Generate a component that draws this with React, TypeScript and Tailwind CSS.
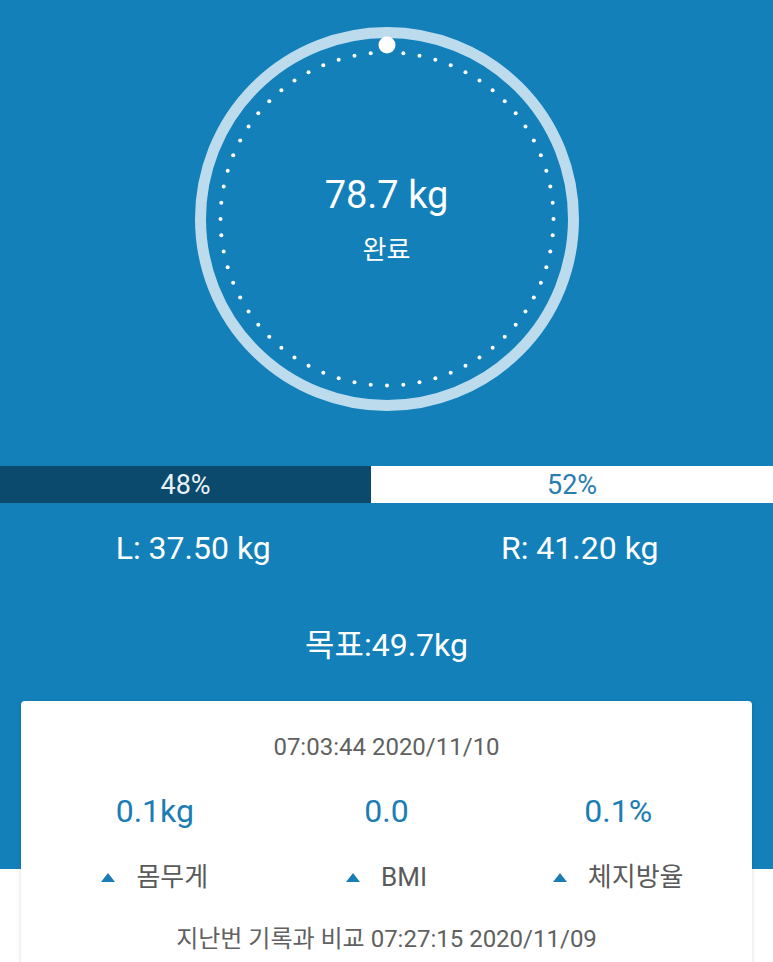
const DOT_COUNT = 64

function Gauge() {
  const cx = 200
  const cy = 200
  const dots = Array.from({ length: DOT_COUNT }, (_, i) => {
    const a = (i / DOT_COUNT) * Math.PI * 2
    return { x: cx + Math.sin(a) * 166.5, y: cy - Math.cos(a) * 166.5, skip: i === 0 }
  })

  return (
    <div className="relative mx-auto h-[400px] w-[400px]">
      <svg width="400" height="400" viewBox="0 0 400 400" className="block">
        <circle cx={cx} cy={cy} r="186.5" fill="none" stroke="#bcdcee" strokeWidth="11" />
        {dots.map((d, i) =>
          d.skip ? null : <circle key={i} cx={d.x} cy={d.y} r="2" fill="#ffffff" />,
        )}
        <circle cx={cx} cy={cy - 174} r="8.5" fill="#ffffff" />
      </svg>
      <div className="absolute inset-0 flex flex-col items-center pt-[154px] text-white">
        <div className="text-[38px] leading-[44px]">78.7 kg</div>
        <div className="mt-[17px] text-[26px] leading-[32px]">완료</div>
      </div>
    </div>
  )
}

function Stat({ value, label }: { value: string; label: string }) {
  return (
    <div className="flex flex-col items-center">
      <div className="text-[32px] leading-[40px] text-[#1c7db4]">{value}</div>
      <div className="mt-[30px] flex items-center gap-[21px]">
        <svg width="14" height="9" viewBox="0 0 14 9" aria-hidden="true">
          <polygon points="7,0 14,9 0,9" fill="#1c7db4" />
        </svg>
        <span className="text-[26px] leading-[32px] text-[#5a5a5a]">{label}</span>
      </div>
    </div>
  )
}

export default function App() {
  return (
    <div className="min-h-[962px] overflow-hidden bg-white font-['Roboto','Noto_Sans_CJK_KR',sans-serif]">
      {/* blue header */}
      <section className="bg-[#1380ba] pt-[19px] pb-[204px]">
        <Gauge />

        <div className="mt-[47px] flex h-[37px]">
          <div className="flex w-[48%] items-center justify-center bg-[#0b4a6c] pt-[2px] text-[27px] text-[#e8f1f6]">
            48%
          </div>
          <div className="flex flex-1 items-center justify-center bg-white pt-[2px] text-[27px] text-[#2a7db1]">
            52%
          </div>
        </div>

        <div className="mt-[25px] grid grid-cols-2 text-center text-[32px] leading-[40px] text-white">
          <div>L: 37.50 kg</div>
          <div>R: 41.20 kg</div>
        </div>

        <div className="mt-[57px] text-center text-[32px] leading-[40px] text-white">목표:49.7kg</div>
      </section>

      {/* comparison card */}
      <div className="relative -mt-[168px] px-[21px]">
        <div className="rounded-[4px] bg-white px-[18px] pt-[31px] pb-[24px] shadow-[0_1px_4px_rgba(0,0,0,0.15)]">
          <div className="text-center text-[24px] leading-[30px] text-[#616161]">07:03:44 2020/11/10</div>

          <div className="mt-[29px] grid grid-cols-3">
            <Stat value="0.1kg" label="몸무게" />
            <Stat value="0.0" label="BMI" />
            <Stat value="0.1%" label="체지방율" />
          </div>

          <div className="mt-[31px] text-center text-[24px] leading-[30px] text-[#616161]">
            지난번 기록과 비교 07:27:15 2020/11/09
          </div>
        </div>
      </div>
    </div>
  )
}
